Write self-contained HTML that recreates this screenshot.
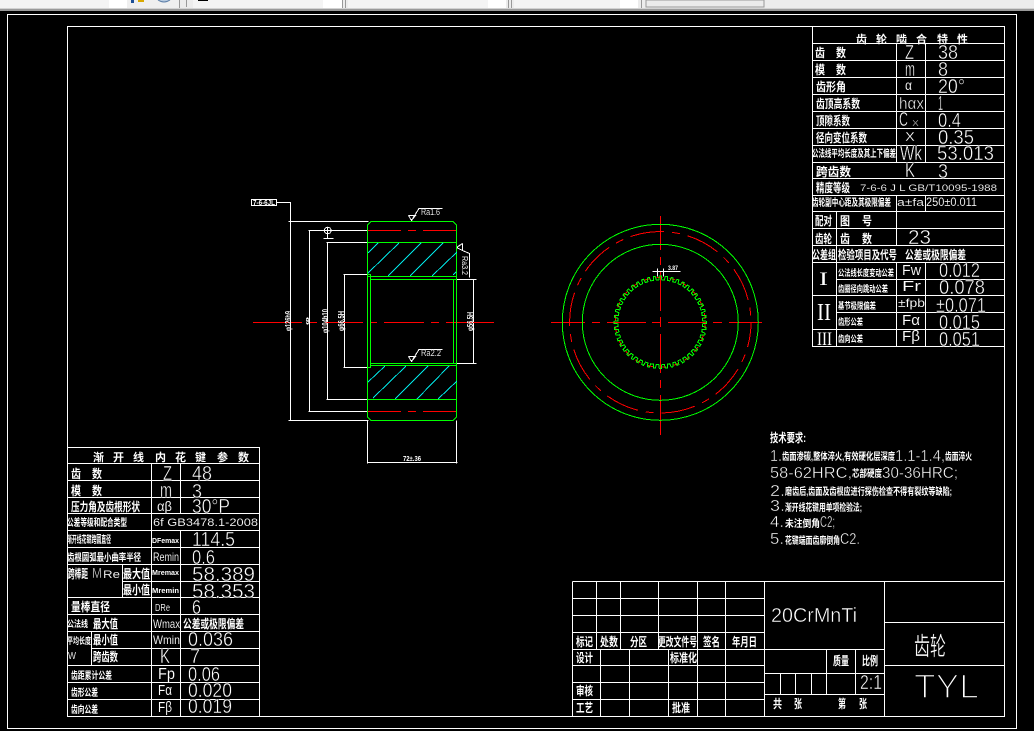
<!DOCTYPE html>
<html><head><meta charset="utf-8"><title>CAD</title>
<style>
html,body{margin:0;padding:0;background:#000;width:1034px;height:731px;overflow:hidden}
svg{display:block}
text{fill:#fff;white-space:pre}
.c{font-family:"Liberation Sans","Noto Sans CJK SC",sans-serif;font-size:12px;font-weight:700}
.n{font-family:"Liberation Sans","Noto Sans CJK SC",sans-serif;font-size:20px;stroke:#000;stroke-width:.45px}
.m{font-family:"Liberation Sans","Noto Sans CJK SC",sans-serif;font-size:14px;stroke:#000;stroke-width:.1px}
.s{font-family:"Liberation Sans","Noto Sans CJK SC",sans-serif;font-size:7px;font-weight:700}
</style></head><body>
<svg width="1034" height="731" viewBox="0 0 1034 731" xmlns="http://www.w3.org/2000/svg">
<defs>
<path id="t" d="M-2.8-42.4L-1.5-42.4L-1-46.2L1-46.2L1.5-42.4L2.8-42.4"/>
<g id="t3"><use href="#t"/><use href="#t" transform="rotate(7.5)"/><use href="#t" transform="rotate(15)"/></g>
<g id="t6"><use href="#t3"/><use href="#t3" transform="rotate(22.5)"/></g>
<g id="t12"><use href="#t6"/><use href="#t6" transform="rotate(45)"/></g>
<g id="t24"><use href="#t12"/><use href="#t12" transform="rotate(90)"/></g>
</defs>
<rect width="1034" height="731" fill="#000"/>
<!-- top strip -->
<rect x="0" y="0" width="1034" height="9" fill="#ececec"/>
<rect x="0" y="0" width="127" height="8" fill="#f4f4f4"/>
<rect x="109" y="0" width="18" height="8" fill="#fff"/>
<rect x="127" y="0" width="52" height="8" fill="#efefef"/>
<rect x="193" y="0" width="130" height="8" fill="#f4f4f4"/>
<rect x="323" y="0" width="19" height="8" fill="#fff"/>
<rect x="348" y="0" width="140" height="8" fill="#f4f4f4"/>
<rect x="488" y="0" width="18" height="8" fill="#fff"/>
<rect x="514" y="0" width="106" height="8" fill="#f4f4f4"/>
<rect x="620" y="0" width="18" height="8" fill="#fff"/>
<rect x="646" y="0" width="118" height="7" fill="#ebebeb" stroke="#999" stroke-width="1"/>
<rect x="198" y="0" width="10" height="1" fill="#000"/>
<rect x="131" y="0" width="3" height="3" fill="#1c4f96"/>
<rect x="138" y="0" width="6" height="2" fill="#d9a800"/>
<path d="M158 0q6 4 12 0" fill="#b7cbe0" stroke="#5d7fa8"/>
<path d="M179.500 0V8M186.500 0V7M342.500 0V8M345.500 0V8M508.500 0V8M511.500 0V8M641.500 0V8" stroke="#999" fill="none" shape-rendering="crispEdges"/>
<rect x="0" y="8" width="1034" height="1" fill="#d2d2d2"/>
<rect x="0" y="9" width="1034" height="2" fill="#9a9a9a"/>

<!-- frames and tables -->
<g stroke="#fff" fill="none" stroke-width="1" shape-rendering="crispEdges">
<path d="M7.500 14.500H1016.500V728.500H7.500Z"/>
<path d="M67.500 26.500H1004.500V716.500H67.500Z"/>
<!-- right table -->
<path d="M812.500 26.500V346.500H1004.500M812.500 43.500H1004.500M812.500 60.500H1004.500M812.500 77.500H1004.500M812.500 94.500H1004.500M812.500 111.500H1004.500M812.500 128.500H1004.500M812.500 145.500H1004.500M812.500 162.500H1004.500M812.500 178.500H1004.500M812.500 195.500H1004.500M812.500 211.500H1004.500M812.500 228.500H1004.500M812.500 245.500H1004.500M812.500 262.500H1004.500M836.500 279.500H1004.500M812.500 295.500H1004.500M836.500 312.500H1004.500M812.500 329.500H1004.500"/>
<path d="M896.500 43.500V162.500M925.500 43.500V162.500M896.500 195.500V211.500M925.500 195.500V211.500M836.500 211.500V346.500M896.500 262.500V346.500M925.500 262.500V346.500M896.500 245.500V211.500"/>
<!-- left table -->
<path d="M67.500 447.500H259.500V716.500M67.500 463.500H259.500M67.500 480.500H259.500M67.500 497.500H259.500M67.500 513.500H259.500M67.500 530.500H259.500M67.500 547.500H259.500M67.500 564.500H259.500M122.500 581.500H259.500M67.500 597.500H259.500M67.500 614.500H259.500M67.500 631.500H259.500M91.500 648.500H259.500M67.500 665.500H259.500M67.500 682.500H259.500M67.500 699.500H259.500"/>
<path d="M151.500 463.500V716.500M180.500 463.500V513.500M180.500 530.500V716.500M122.500 564.500V597.500M91.500 631.500V665.500"/>
<!-- title block -->
<path d="M572.500 581.500H1004.500M572.500 581.500V716.500M572.500 598.500H764.500M572.500 615.500H764.500M572.500 632.500H764.500M572.500 649.500H884.500M572.500 665.500H764.500M572.500 682.500H764.500M572.500 699.500H764.500M764.500 673.500H884.500M764.500 694.500H884.500M884.500 622.500H1004.500M884.500 665.500H1004.500"/>
<path d="M596.500 581.500V649.500M620.500 581.500V649.500M658.500 581.500V649.500M697.500 581.500V716.500M725.500 581.500V716.500M764.500 581.500V716.500M600.500 649.500V716.500M629.500 649.500V716.500M668.500 649.500V716.500M884.500 581.500V716.500M826.500 649.500V694.500M855.500 649.500V694.500M780.500 673.500V694.500M795.500 673.500V694.500M811.500 673.500V694.500"/>
<!-- dims -->
<path d="M251.500 199.500H276.500V205.500H251.500ZM276.500 202.500H290.500V221.500M288.500 221.500H368.500M290.500 221.500V420.500M288.500 420.500H368.500M309.500 230.500V411.500M308.500 230.500H368.500M308.500 411.500H368.500M327.500 242.500V399.500M326.500 242.500H368.500M326.500 399.500H368.500M344.500 274.500V367.500M343.500 274.500H368.500M343.500 367.500H368.500M473.500 279.500V363.500M453.500 279.500H476.500M453.500 363.500H476.500M367.500 420.500V463.500M456.500 420.500V463.500M367.500 462.500H457.500"/>
<path d="M323.500 238.500H333.500M327.500 234.500V238.500M324.500 230.500H331.500M327.500 227.500V234.500"/>
<circle cx="327.700" cy="230.500" r="3.300"/>
<path d="M408.500 215.500H415.500L411.500 220.500L408.500 215.500M411.500 220.500L419 208.500H442.500"/>
<path d="M408.500 356.500H415.500L411.500 361.500L408.500 356.500M411.500 361.500L419 349.500H442.500"/>
<path d="M462.500 243.500V250.500L456.500 247.500L462.500 243.500M462.500 250.500L469.500 253.500V277.500"/>
<path d="M652.500 271.500H680.500M657.500 268.500V276.500M663.500 268.500V276.500"/>
</g>

<!-- red -->
<g stroke="#f00" fill="none" shape-rendering="crispEdges">
<path d="M253 322.500H302M310 322.500H317M325 322.500H363M370 322.500H377M384 322.500H424M431 322.500H439M446 322.500H494"/>
<path d="M368 230.500H401M408 230.500H416M423 230.500H456M368 411.500H401M408 411.500H416M423 411.500H456"/>
<path d="M551 322.500H585M592 322.500H600M607 322.500H646M652 322.500H661M668 322.500H707M713 322.500H722M729 322.500H762"/>
<path d="M660.500 216V250M660.500 257V265M660.500 272V311M660.500 317V327M660.500 334V373M660.500 380V388M660.500 395V435"/>
<circle cx="660.300" cy="322.300" r="90.700" stroke-dasharray="34 8 8 8" stroke-dashoffset="9"/>
<circle cx="660.300" cy="322.300" r="45" stroke-dasharray="6 7"/>
</g>

<!-- green -->
<g stroke="#0f0" fill="none" shape-rendering="crispEdges">
<path d="M371 221.500H453L456.500 225V417L453 420.500H371L367.500 417V225Z"/>
<path d="M368 242.500H457M368 399.500H457M368 274.500H371M368 276.500H457M371 279.500H457M371 363.500H457M371 365.500H457M368 367.500H371M370.500 274V367M453.500 279V364"/>
<circle cx="660.300" cy="322.300" r="98"/>
<circle cx="660.300" cy="322.300" r="78"/>
<g transform="translate(660.300 322.300)"><use href="#t24"/><use href="#t24" transform="rotate(180)"/></g>
</g>

<!-- cyan hatch -->
<path d="M368 253L378 243M368 273L399 243M388 276L421 243M410 276L443 243M432 276L457 252M453 275L456 272M368 382L385 366M373 398L406 366M395 399L428 366M417 399L449 366M438 399L457 381" stroke="#00e6e6" fill="none" shape-rendering="crispEdges"/>

<!-- right table text -->
<g class="c">
<text x="856 876 896 916 937 957" y="43" font-size="11">齿轮啮合特性</text>
<text x="815" y="57" textLength="10" lengthAdjust="spacingAndGlyphs">齿</text><text x="836" y="57" textLength="10" lengthAdjust="spacingAndGlyphs">数</text>
<text x="815" y="74" textLength="10" lengthAdjust="spacingAndGlyphs">模</text><text x="836" y="74" textLength="10" lengthAdjust="spacingAndGlyphs">数</text>
<text x="816" y="91" textLength="30" lengthAdjust="spacingAndGlyphs">齿形角</text>
<text x="816" y="108" textLength="44" lengthAdjust="spacingAndGlyphs">齿顶高系数</text>
<text x="816" y="125" textLength="34" lengthAdjust="spacingAndGlyphs">顶隙系数</text>
<text x="816" y="142" textLength="51" lengthAdjust="spacingAndGlyphs">径向变位系数</text>
<text x="812" y="157" textLength="84" lengthAdjust="spacingAndGlyphs" font-size="10">公法线平均长度及其上下偏差</text>
<text x="816" y="176" textLength="35" lengthAdjust="spacingAndGlyphs">跨齿数</text>
<text x="816" y="192" textLength="34" lengthAdjust="spacingAndGlyphs">精度等级</text>
<text x="812" y="206" textLength="79" lengthAdjust="spacingAndGlyphs" font-size="10">齿轮副中心距及其极限偏差</text>
<text x="815" y="225" textLength="17" lengthAdjust="spacingAndGlyphs">配对</text>
<text x="840" y="225" textLength="10" lengthAdjust="spacingAndGlyphs">图</text><text x="862" y="225" textLength="10" lengthAdjust="spacingAndGlyphs">号</text>
<text x="815" y="243" textLength="17" lengthAdjust="spacingAndGlyphs">齿轮</text>
<text x="840" y="243" textLength="10" lengthAdjust="spacingAndGlyphs">齿</text><text x="862" y="243" textLength="10" lengthAdjust="spacingAndGlyphs">数</text>
<text x="812" y="259" textLength="24" lengthAdjust="spacingAndGlyphs">公差组</text>
<text x="838" y="259" textLength="59" lengthAdjust="spacingAndGlyphs">检验项目及代号</text>
<text x="905" y="259" textLength="61" lengthAdjust="spacingAndGlyphs">公差或极限偏差</text>
<text x="838" y="276" textLength="56" lengthAdjust="spacingAndGlyphs" font-size="9">公法线长度变动公差</text>
<text x="838" y="292" textLength="50" lengthAdjust="spacingAndGlyphs" font-size="9">齿圈径向跳动公差</text>
<text x="838" y="309" textLength="38" lengthAdjust="spacingAndGlyphs" font-size="9">基节极限偏差</text>
<text x="838" y="325" textLength="25" lengthAdjust="spacingAndGlyphs" font-size="9">齿形公差</text>
<text x="838" y="342" textLength="25" lengthAdjust="spacingAndGlyphs" font-size="9">齿向公差</text>
</g>
<g class="n" transform="translate(0 1)">
<text x="905" y="58" textLength="9" lengthAdjust="spacingAndGlyphs">Z</text><text x="938" y="58" textLength="20" lengthAdjust="spacingAndGlyphs">38</text>
<text x="905" y="75" textLength="10" lengthAdjust="spacingAndGlyphs">m</text><text x="938" y="75" textLength="10" lengthAdjust="spacingAndGlyphs">8</text>
<text x="938" y="92" textLength="27" lengthAdjust="spacingAndGlyphs">20°</text>
<text x="899" y="108" textLength="25" lengthAdjust="spacingAndGlyphs" font-size="17">hαx</text><text x="938" y="109" textLength="5" lengthAdjust="spacingAndGlyphs">1</text>
<text x="899" y="125" textLength="9" lengthAdjust="spacingAndGlyphs">C</text><text x="912" y="125" textLength="7" lengthAdjust="spacingAndGlyphs" font-size="11">x</text><text x="938" y="126" textLength="23" lengthAdjust="spacingAndGlyphs">0.4</text>
<text x="905" y="140" textLength="10" lengthAdjust="spacingAndGlyphs" font-size="17">x</text><text x="938" y="143" textLength="36" lengthAdjust="spacingAndGlyphs">0.35</text>
<text x="900" y="159" textLength="22" lengthAdjust="spacingAndGlyphs">Wk</text><text x="937" y="159" textLength="57" lengthAdjust="spacingAndGlyphs">53.013</text>
<text x="905" y="176" textLength="10" lengthAdjust="spacingAndGlyphs">K</text><text x="938" y="177" textLength="10" lengthAdjust="spacingAndGlyphs">3</text>
<text x="908" y="243" textLength="23" lengthAdjust="spacingAndGlyphs">23</text>
<text x="939" y="276" textLength="41" lengthAdjust="spacingAndGlyphs">0.012</text>
<text x="939" y="293" textLength="46" lengthAdjust="spacingAndGlyphs">0.078</text>
<text x="936" y="311" textLength="50" lengthAdjust="spacingAndGlyphs">±0.071</text>
<text x="939" y="328" textLength="41" lengthAdjust="spacingAndGlyphs">0.015</text>
<text x="939" y="345" textLength="41" lengthAdjust="spacingAndGlyphs">0.051</text>
</g>
<g class="m">
<text x="905" y="90" textLength="7" lengthAdjust="spacingAndGlyphs">α</text>
<text x="860" y="191" textLength="137" lengthAdjust="spacingAndGlyphs" font-size="9">7-6-6 J L GB/T10095-1988</text>
<text x="897" y="206" textLength="27" lengthAdjust="spacingAndGlyphs" font-size="11">a±fa</text>
<text x="926" y="206" textLength="51" lengthAdjust="spacingAndGlyphs" font-size="12">250±0.011</text>
<text x="902" y="275" textLength="19" lengthAdjust="spacingAndGlyphs" font-size="15">Fw</text>
<text x="902" y="291" textLength="19" lengthAdjust="spacingAndGlyphs" font-size="15">Fr</text>
<text x="898" y="307" textLength="27" lengthAdjust="spacingAndGlyphs" font-size="12">±fpb</text>
<text x="902" y="325" textLength="18" lengthAdjust="spacingAndGlyphs" font-size="15">Fα</text>
<text x="902" y="341" textLength="18" lengthAdjust="spacingAndGlyphs" font-size="15">Fβ</text>
</g>
<g style="font-family:'Liberation Serif',serif" font-size="18">
<text x="819" y="285" textLength="9" lengthAdjust="spacingAndGlyphs" font-size="19">I</text>
<text x="817" y="320" textLength="14" lengthAdjust="spacingAndGlyphs" font-size="24">II</text>
<text x="817" y="345" textLength="15" lengthAdjust="spacingAndGlyphs" font-size="19">III</text>
</g>

<!-- left table text -->
<g class="c">
<text x="93 113 133 155 175 195 217 238" y="461" font-size="11">渐开线内花键参数</text>
<text x="71" y="478" textLength="10" lengthAdjust="spacingAndGlyphs">齿</text><text x="92" y="478" textLength="10" lengthAdjust="spacingAndGlyphs">数</text>
<text x="71" y="495" textLength="10" lengthAdjust="spacingAndGlyphs">模</text><text x="92" y="495" textLength="10" lengthAdjust="spacingAndGlyphs">数</text>
<text x="71" y="511" textLength="69" lengthAdjust="spacingAndGlyphs">压力角及齿根形状</text>
<text x="67" y="526" textLength="60" lengthAdjust="spacingAndGlyphs" font-size="10">公差等级和配合类型</text>
<text x="67" y="543" textLength="44" lengthAdjust="spacingAndGlyphs" font-size="10">渐开线花键跨圆直径</text>
<text x="67" y="561" textLength="74" lengthAdjust="spacingAndGlyphs" font-size="10">齿根圆弧最小曲率半径</text>
<text x="68" y="578" textLength="20" lengthAdjust="spacingAndGlyphs">跨棒距</text>
<text x="123" y="578" textLength="27" lengthAdjust="spacingAndGlyphs">最大值</text>
<text x="123" y="594" textLength="27" lengthAdjust="spacingAndGlyphs">最小值</text>
<text x="71" y="611" textLength="39" lengthAdjust="spacingAndGlyphs">量棒直径</text>
<text x="67" y="627" textLength="21" lengthAdjust="spacingAndGlyphs" font-size="9">公法线</text>
<text x="93" y="628" textLength="25" lengthAdjust="spacingAndGlyphs">最大值</text>
<text x="183" y="628" textLength="61" lengthAdjust="spacingAndGlyphs">公差或极限偏差</text>
<text x="67" y="644" textLength="24" lengthAdjust="spacingAndGlyphs" font-size="9">平均长度</text>
<text x="93" y="644" textLength="25" lengthAdjust="spacingAndGlyphs">最小值</text>
<text x="93" y="661" textLength="25" lengthAdjust="spacingAndGlyphs">跨齿数</text>
<text x="71" y="679" textLength="41" lengthAdjust="spacingAndGlyphs" font-size="10">齿距累计公差</text>
<text x="71" y="696" textLength="27" lengthAdjust="spacingAndGlyphs" font-size="10">齿形公差</text>
<text x="71" y="713" textLength="27" lengthAdjust="spacingAndGlyphs" font-size="10">齿向公差</text>
</g>
<g class="n" transform="translate(0 1)">
<text x="163" y="479" textLength="9" lengthAdjust="spacingAndGlyphs">Z</text><text x="192" y="479" textLength="20" lengthAdjust="spacingAndGlyphs">48</text>
<text x="160" y="496" textLength="12" lengthAdjust="spacingAndGlyphs">m</text><text x="192" y="497" textLength="10" lengthAdjust="spacingAndGlyphs">3</text>
<text x="192" y="512" textLength="38" lengthAdjust="spacingAndGlyphs">30°P</text>
<text x="192" y="545" textLength="43" lengthAdjust="spacingAndGlyphs">114.5</text>
<text x="192" y="563" textLength="23" lengthAdjust="spacingAndGlyphs">0.6</text>
<text x="192" y="580" textLength="63" lengthAdjust="spacingAndGlyphs">58.389</text>
<text x="192" y="597" textLength="63" lengthAdjust="spacingAndGlyphs">58.353</text>
<text x="192" y="613" textLength="9" lengthAdjust="spacingAndGlyphs">6</text>
<text x="188" y="645" textLength="45" lengthAdjust="spacingAndGlyphs">0.036</text>
<text x="160" y="662" textLength="10" lengthAdjust="spacingAndGlyphs">K</text><text x="190" y="662" textLength="10" lengthAdjust="spacingAndGlyphs">7</text>
<text x="188" y="680" textLength="32" lengthAdjust="spacingAndGlyphs">0.06</text>
<text x="188" y="696" textLength="44" lengthAdjust="spacingAndGlyphs">0.020</text>
<text x="188" y="712" textLength="44" lengthAdjust="spacingAndGlyphs">0.019</text>
<text x="92" y="577" textLength="10" lengthAdjust="spacingAndGlyphs" font-size="15">M</text>
</g>
<g class="m">
<text x="157" y="511" textLength="15" lengthAdjust="spacingAndGlyphs">αβ</text>
<text x="153" y="526" textLength="105" lengthAdjust="spacingAndGlyphs" font-size="11">6f GB3478.1-2008</text>
<text x="103" y="578" textLength="17" lengthAdjust="spacingAndGlyphs" font-size="11">Re</text>
<text x="153" y="561" textLength="26" lengthAdjust="spacingAndGlyphs" font-size="12">Remin</text>
<text x="155" y="611" textLength="15" lengthAdjust="spacingAndGlyphs" font-size="10">DRe</text>
<text x="153" y="628" textLength="27" lengthAdjust="spacingAndGlyphs" font-size="12">Wmax</text>
<text x="153" y="644" textLength="27" lengthAdjust="spacingAndGlyphs" font-size="12">Wmin</text>
<text x="68" y="659" textLength="8" lengthAdjust="spacingAndGlyphs" font-size="10">W</text>
<text x="158" y="679" textLength="17" lengthAdjust="spacingAndGlyphs" font-size="16">Fp</text>
<text x="158" y="695" textLength="14" lengthAdjust="spacingAndGlyphs" font-size="15">Fα</text>
<text x="158" y="712" textLength="14" lengthAdjust="spacingAndGlyphs" font-size="15">Fβ</text>
</g>
<g class="s">
<text x="152" y="543" textLength="27" lengthAdjust="spacingAndGlyphs">DFemax</text>
<text x="152" y="575" textLength="27" lengthAdjust="spacingAndGlyphs">Mremax</text>
<text x="152" y="593" textLength="27" lengthAdjust="spacingAndGlyphs">Mremin</text>
</g>

<!-- title block text -->
<g class="c">
<text x="576" y="646" textLength="17" lengthAdjust="spacingAndGlyphs">标记</text>
<text x="600" y="646" textLength="18" lengthAdjust="spacingAndGlyphs">处数</text>
<text x="630" y="646" textLength="17" lengthAdjust="spacingAndGlyphs">分区</text>
<text x="658" y="646" textLength="39" lengthAdjust="spacingAndGlyphs">更改文件号</text>
<text x="703" y="646" textLength="17" lengthAdjust="spacingAndGlyphs">签名</text>
<text x="732" y="646" textLength="25" lengthAdjust="spacingAndGlyphs">年月日</text>
<text x="576" y="662" textLength="17" lengthAdjust="spacingAndGlyphs">设计</text>
<text x="670" y="662" textLength="27" lengthAdjust="spacingAndGlyphs">标准化</text>
<text x="576" y="695" textLength="17" lengthAdjust="spacingAndGlyphs">审核</text>
<text x="576" y="712" textLength="17" lengthAdjust="spacingAndGlyphs">工艺</text>
<text x="672" y="712" textLength="18" lengthAdjust="spacingAndGlyphs">批准</text>
<text x="833" y="665" textLength="16" lengthAdjust="spacingAndGlyphs">质量</text>
<text x="862" y="665" textLength="16" lengthAdjust="spacingAndGlyphs">比例</text>
<text x="773" y="708" textLength="9" lengthAdjust="spacingAndGlyphs">共</text>
<text x="794" y="708" textLength="8" lengthAdjust="spacingAndGlyphs">张</text>
<text x="838" y="708" textLength="8" lengthAdjust="spacingAndGlyphs">第</text>
<text x="859" y="708" textLength="8" lengthAdjust="spacingAndGlyphs">张</text>
</g>
<g class="n">
<text x="771" y="622" textLength="86" lengthAdjust="spacingAndGlyphs">20CrMnTi</text>
<text x="860" y="689" textLength="22" lengthAdjust="spacingAndGlyphs">2:1</text>
<text x="914" y="655" textLength="32" lengthAdjust="spacingAndGlyphs" font-size="25" style="stroke-width:.3px;font-weight:400">齿轮</text>
<text x="914" y="698" textLength="65" lengthAdjust="spacingAndGlyphs" font-size="34" style="stroke-width:1.6px">TYL</text>
</g>

<!-- tech requirements -->
<g class="c">
<text x="770" y="442" textLength="36" lengthAdjust="spacingAndGlyphs">技术要求:</text>
<text x="782" y="460" textLength="113" lengthAdjust="spacingAndGlyphs" font-size="10">齿面渗碳,整体淬火,有效硬化层深度</text>
<text x="945" y="460" textLength="27" lengthAdjust="spacingAndGlyphs" font-size="10">齿面淬火</text>
<text x="852" y="477" textLength="30" lengthAdjust="spacingAndGlyphs" font-size="10">芯部硬度</text>
<text x="785" y="495" textLength="167" lengthAdjust="spacingAndGlyphs" font-size="10">磨齿后,齿面及齿根应进行探伤检查不得有裂纹等缺陷;</text>
<text x="785" y="511" textLength="77" lengthAdjust="spacingAndGlyphs" font-size="10">渐开线花键用单项检验法;</text>
<text x="785" y="527" textLength="35" lengthAdjust="spacingAndGlyphs" font-size="10">未注倒角</text>
<text x="785" y="544" textLength="55" lengthAdjust="spacingAndGlyphs" font-size="10">花键端面齿廓倒角</text>
</g>
<g class="n" style="stroke-width:.4px">
<text x="770" y="461" textLength="12" lengthAdjust="spacingAndGlyphs" font-size="15.500">1.</text>
<text x="895" y="461" textLength="50" lengthAdjust="spacingAndGlyphs" font-size="15.500">1.1-1.4,</text>
<text x="770" y="478" textLength="82" lengthAdjust="spacingAndGlyphs" font-size="15.500">58-62HRC,</text>
<text x="882" y="478" textLength="76" lengthAdjust="spacingAndGlyphs" font-size="15.500">30-36HRC;</text>
<text x="770" y="496" textLength="15" lengthAdjust="spacingAndGlyphs" font-size="15.500">2.</text>
<text x="770" y="511" textLength="15" lengthAdjust="spacingAndGlyphs" font-size="15.500">3.</text>
<text x="770" y="527" textLength="14" lengthAdjust="spacingAndGlyphs" font-size="15.500">4.</text>
<text x="820" y="527" textLength="15" lengthAdjust="spacingAndGlyphs" font-size="15.500">C2;</text>
<text x="770" y="544" textLength="14" lengthAdjust="spacingAndGlyphs" font-size="15.500">5.</text>
<text x="840" y="544" textLength="20" lengthAdjust="spacingAndGlyphs" font-size="15.500">C2.</text>
</g>

<!-- drawing labels -->
<g class="s">
<text x="253" y="205" textLength="22" lengthAdjust="spacingAndGlyphs">7-6-6JL</text>
<text x="403" y="461" textLength="18" lengthAdjust="spacingAndGlyphs">72±.36</text>
<text x="668" y="270" textLength="10" lengthAdjust="spacingAndGlyphs" font-size="6">3.87</text>
<text transform="translate(291 331) rotate(-90)" textLength="20" lengthAdjust="spacingAndGlyphs" font-size="8">φ126h9</text>
<text transform="translate(309 325) rotate(-90)" textLength="8" lengthAdjust="spacingAndGlyphs" font-size="5">φ</text>
<text transform="translate(328 333) rotate(-90)" textLength="24" lengthAdjust="spacingAndGlyphs" font-size="8">φ104h10</text>
<text transform="translate(344 331) rotate(-90)" textLength="20" lengthAdjust="spacingAndGlyphs" font-size="8">φ66.5H</text>
<text transform="translate(473 331) rotate(-90)" textLength="19" lengthAdjust="spacingAndGlyphs" font-size="8">φ56.5H</text>
<text transform="translate(462 256) rotate(90)" textLength="19" lengthAdjust="spacingAndGlyphs" font-size="8" font-weight="400">Ra3.2</text>
</g>
<g class="m">
<text x="421" y="215" textLength="19" lengthAdjust="spacingAndGlyphs" font-size="9">Ra1.6</text>
<text x="421" y="356" textLength="20" lengthAdjust="spacingAndGlyphs" font-size="9">Ra2.2</text>
</g>
</svg>
</body></html>
